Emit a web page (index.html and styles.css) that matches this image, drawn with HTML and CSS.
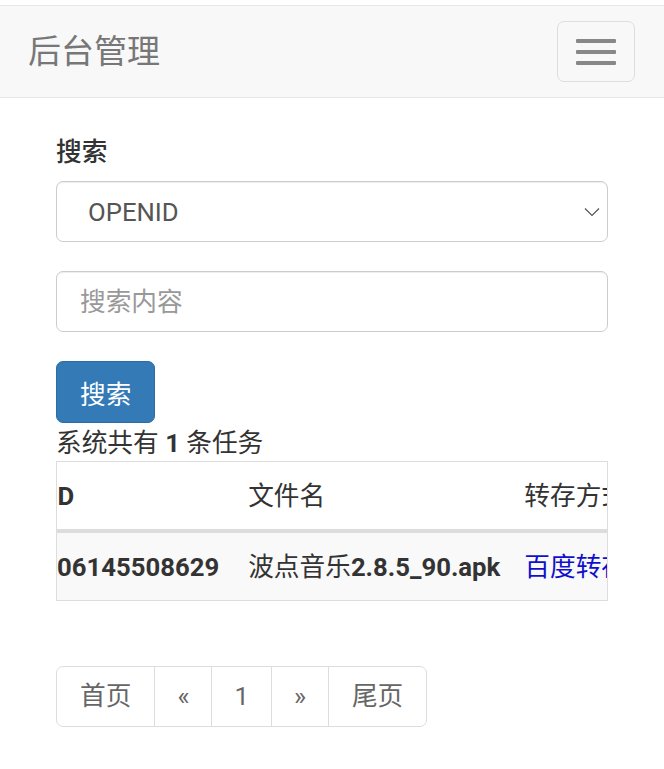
FILE: index.html
```html
<!DOCTYPE html>
<html lang="zh-CN">
<head>
<meta charset="utf-8">
<title>后台管理</title>
<link rel="stylesheet" href="styles.css">
</head>
<body>
<nav class="navbar">
  <a class="brand" href="#">后台管理</a>
  <button class="toggle" type="button" aria-label="菜单">
    <span class="bar"></span><span class="bar"></span><span class="bar"></span>
  </button>
</nav>
<main class="container">
  <form class="search-form">
    <label class="label">搜索</label>
    <div class="form-group select-wrap">
      <select class="control select">
        <option>OPENID</option>
      </select>
      <svg class="chevron" width="16" height="10" viewBox="0 0 16 10"><path d="M1 1.5 L8 8.5 L15 1.5" fill="none" stroke="#555" stroke-width="1.2"/></svg>
    </div>
    <div class="form-group">
      <input class="control input" type="text" placeholder="搜索内容">
    </div>
    <button class="btn-primary" type="button">搜索</button>
  </form>
  <p class="summary">系统共有 <b>1</b> 条任务</p>
  <div class="table-wrap" id="tableWrap">
    <table class="table">
      <thead>
        <tr><th class="id-head">ID</th><th><span class="cjk">文件名</span></th><th><span class="cjk">转存方式</span></th></tr>
      </thead>
      <tbody>
        <tr><td class="id-cell">06145508629</td><td><span class="cjk">波点音乐</span>2.8.5_90.apk</td><td><a class="link cjk" href="#">百度转存</a></td></tr>
      </tbody>
    </table>
  </div>
  <ul class="pagination">
    <li><a href="#">首页</a></li>
    <li><a href="#">«</a></li>
    <li><a href="#">1</a></li>
    <li><a href="#">»</a></li>
    <li><a href="#">尾页</a></li>
  </ul>
</main>
<script src="script.js"></script>
</body>
</html>
```
FILE: styles.css
```css
* { box-sizing: border-box; }
html, body { margin: 0; padding: 0; background: #fff; }
body {
  font-family: Roboto, "Noto Sans CJK SC", sans-serif;
  font-size: 25.7px;
  line-height: 36px;
  color: #333;
}
.navbar {
  margin-top: 5px;
  height: 93px;
  background: #f8f8f8;
  border-top: 1px solid #e7e7e7;
  border-bottom: 1px solid #e7e7e7;
  display: flex;
  align-items: center;
  justify-content: space-between;
  padding: 0 29px 0 28px;
}
.brand {
  font-size: 33px;
  color: #777;
  text-decoration: none;
  line-height: 40px;
}
.toggle {
  width: 78px;
  height: 61px;
  border: 1px solid #ddd;
  border-radius: 7px;
  background: transparent;
  display: flex;
  flex-direction: column;
  align-items: center;
  justify-content: center;
  gap: 7px;
  padding: 0;
}
.bar {
  display: block;
  width: 40px;
  height: 4px;
  border-radius: 1px;
  background: #888;
}
.container { padding: 0 56px; }
.search-form { margin-top: 36px; }
.label {
  display: block;
  font-weight: 500;
  margin-bottom: 11px;
}
.form-group { margin-bottom: 29px; }
.select-wrap { position: relative; }
.control {
  display: block;
  width: 100%;
  height: 61px;
  border: 1px solid #ccc;
  border-radius: 7px;
  background: #fff;
  font-family: Roboto, "Noto Sans CJK SC", sans-serif;
  font-size: 25.7px;
  color: #555;
  box-shadow: inset 0 1px 1px rgba(0,0,0,.075);
}
.select {
  appearance: none;
  -webkit-appearance: none;
  padding: 0 40px 0 31px;
}
.chevron {
  position: absolute;
  right: 8px;
  top: 26px;
}
.input { padding: 0 23px; }
.input::placeholder { color: #999; }
.btn-primary {
  display: block;
  height: 62px;
  padding: 0 23px;
  background: #337ab7;
  border: 1px solid #2e6da4;
  border-radius: 7px;
  color: #fff;
  font-family: Roboto, "Noto Sans CJK SC", sans-serif;
  font-size: 25.7px;
}
.summary { margin: 2px 0 0; }
.table-wrap {
  border: 1px solid #ddd;
  overflow: hidden;
}
.table {
  border-collapse: collapse;
  border-spacing: 0;
  white-space: nowrap;
}
.table th, .table td {
  padding: 16px 12px 15px;
  text-align: left;
  font-weight: 700;
  line-height: 36px;
}
.table th { border-bottom: 4px solid #ddd; }
.table td { background: #f9f9f9; border-top: 1px solid #ddd; }
.cjk { font-weight: 400; }
.table .id-cell { padding-left: 19px; padding-right: 17px; }
.link { color: #1010cc; text-decoration: none; }
.pagination {
  list-style: none;
  margin: 65px 0 0;
  padding: 0;
  display: inline-flex;
}
.pagination li a {
  display: block;
  height: 61px;
  line-height: 59px;
  padding: 0 22px;
  border: 1px solid #ddd;
  margin-left: -1px;
  color: #666;
  text-decoration: none;
  background: #fff;
}
.pagination li:first-child a { margin-left: 0; border-radius: 7px 0 0 7px; padding: 0 23px; }
.pagination li:last-child a { border-radius: 0 7px 7px 0; padding: 0 23px; }
```
FILE: script.js
```js
document.getElementById('tableWrap').scrollLeft = 19;
```
